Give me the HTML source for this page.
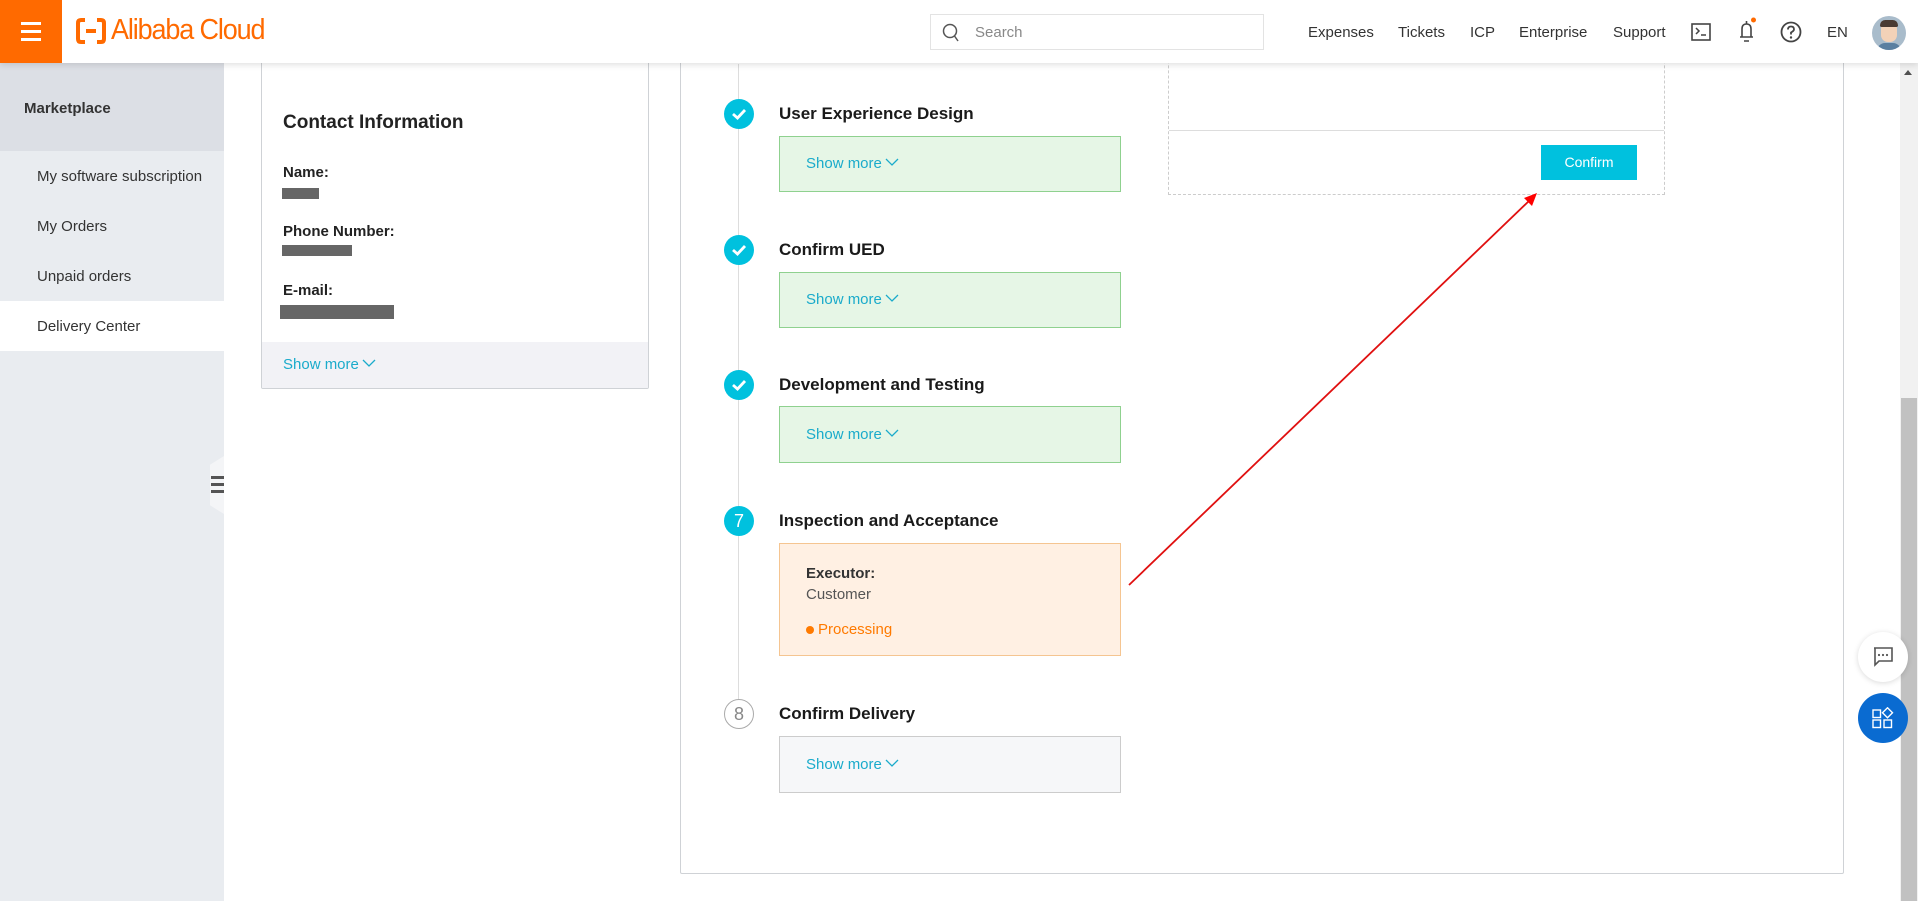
<!DOCTYPE html>
<html><head><meta charset="utf-8"><style>
*{margin:0;padding:0;box-sizing:border-box}
body{width:1918px;height:901px;overflow:hidden;background:#fff;font-family:"Liberation Sans",sans-serif;position:relative}
.abs{position:absolute}
.hdr{left:0;top:0;width:1918px;height:63px;background:#fff;box-shadow:0 2px 6px rgba(0,0,0,.12);z-index:10}
.nav{top:24px;font-size:15px;color:#333}
.side{left:0;top:63px;width:224px;height:838px;background:#e9ecf0}
.si{left:37px;font-size:15px;color:#333}
.card{border:1px solid #cfd2d6;border-radius:2px;background:#fff}
.lbl{font-size:15px;font-weight:bold;color:#222;left:283px}
.bar{background:#666;height:11px}
.sm{font-size:15px;color:#1aabcb}
.sm svg{vertical-align:1px;margin-left:3px}
.ttl{left:779px;font-size:17px;font-weight:bold;color:#1a1a1a}
.box{left:779px;width:342px}
.g{background:#e6f6e6;border:1px solid #8fd18f}
.dot{left:724px;width:30px;height:30px;border-radius:50%;background:#00c1de}
</style></head><body>
<div class="abs hdr">
 <div class="abs" style="left:0;top:0;width:62px;height:63px;background:#ff6a00">
  <div class="abs" style="left:21px;top:22px;width:20px;height:3px;background:#fff"></div>
  <div class="abs" style="left:21px;top:30px;width:20px;height:3px;background:#fff"></div>
  <div class="abs" style="left:21px;top:38px;width:20px;height:3px;background:#fff"></div>
 </div>
 <svg class="abs" style="left:76px;top:18px" width="30" height="26" viewBox="0 0 30 26"><path d="M9 2H5Q2 2 2 5V21Q2 24 5 24H9M21 2H25Q28 2 28 5V21Q28 24 25 24H21M10 13H20" fill="none" stroke="#ff6a00" stroke-width="4"/></svg>
 <div class="abs" style="left:111px;top:14px;font-size:29px;color:#ff6a00;letter-spacing:-1.2px;transform:scaleX(.93);transform-origin:left">Alibaba Cloud</div>
 <div class="abs" style="left:930px;top:14px;width:334px;height:36px;border:1px solid #e3e3e3">
  <svg class="abs" style="left:11px;top:8px" width="18" height="20" viewBox="0 0 18 20"><circle cx="8" cy="8" r="6.5" fill="none" stroke="#555" stroke-width="1.5"/><path d="M12.5 13L16 18" stroke="#555" stroke-width="1.5"/></svg>
  <div class="abs" style="left:44px;top:9px;font-size:15px;color:#888">Search</div>
 </div>
 <div class="abs nav" style="left:1308px">Expenses</div>
 <div class="abs nav" style="left:1398px">Tickets</div>
 <div class="abs nav" style="left:1470px">ICP</div>
 <div class="abs nav" style="left:1519px">Enterprise</div>
 <div class="abs nav" style="left:1613px">Support</div>
 <svg class="abs" style="left:1691px;top:23px" width="20" height="18" viewBox="0 0 20 18"><rect x="1" y="1" width="18" height="16" fill="none" stroke="#444" stroke-width="1.6"/><path d="M5 5L8 8L5 11M10 12H15" fill="none" stroke="#444" stroke-width="1.5"/></svg>
 <svg class="abs" style="left:1736px;top:17px" width="22" height="28" viewBox="0 0 22 28"><path d="M4 20H17M6 20V12Q6 7 10.5 7Q15 7 15 12V20M10.5 4V7M8 24H13" fill="none" stroke="#444" stroke-width="1.6"/><circle cx="17.5" cy="3" r="2.5" fill="#ff6a00"/></svg>
 <svg class="abs" style="left:1780px;top:21px" width="22" height="22" viewBox="0 0 22 22"><circle cx="11" cy="11" r="9.5" fill="none" stroke="#444" stroke-width="1.8"/><path d="M8 8.5Q8 5.5 11 5.5Q14 5.5 14 8.3Q14 10 11 11.5V13.5" fill="none" stroke="#444" stroke-width="1.8"/><circle cx="11" cy="16.5" r="1.2" fill="#444"/></svg>
 <div class="abs nav" style="left:1827px">EN</div>
 <div class="abs" style="left:1872px;top:16px;width:34px;height:34px;border-radius:50%;background:#a9bccb;overflow:hidden">
  <div class="abs" style="left:9px;top:6px;width:16px;height:20px;border-radius:7px;background:#f3d2b8"></div>
  <div class="abs" style="left:8px;top:4px;width:18px;height:7px;border-radius:6px 6px 2px 2px;background:#4a3b33"></div>
  <div class="abs" style="left:5px;top:27px;width:24px;height:10px;border-radius:8px 8px 0 0;background:#5a7fa0"></div>
 </div>
</div>

<div class="abs side">
 <div class="abs" style="left:0;top:0;width:224px;height:88px;background:#dcdfe5"></div>
 <div class="abs" style="left:24px;top:37px;font-size:15px;font-weight:bold;color:#333">Marketplace</div>
 <div class="abs si" style="top:105px">My software subscription</div>
 <div class="abs si" style="top:155px">My Orders</div>
 <div class="abs si" style="top:205px">Unpaid orders</div>
 <div class="abs" style="left:0;top:238px;width:224px;height:50px;background:#fff"></div>
 <div class="abs si" style="top:255px">Delivery Center</div>
</div>
<div class="abs" style="left:210px;top:456px;width:14px;height:58px;background:#f4f5f7;clip-path:polygon(0 15%,100% 0,100% 100%,0 85%)"></div>
<div class="abs" style="left:211px;top:476px;width:13px;height:3px;background:#555"></div>
<div class="abs" style="left:211px;top:483px;width:13px;height:3px;background:#555"></div>
<div class="abs" style="left:211px;top:490px;width:13px;height:3px;background:#555"></div>

<div class="abs card" style="left:261px;top:40px;width:388px;height:349px;overflow:hidden">
 <div class="abs" style="left:0;top:301px;width:388px;height:48px;background:#f2f2f6"></div>
 <div class="abs sm" style="left:21px;top:315px">Show more<svg width="14" height="9" viewBox="0 0 14 9"><path d="M1 1L7 7L13 1" fill="none" stroke="#1aabcb" stroke-width="1.3"/></svg></div>
</div>
<div class="abs" style="left:283px;top:112px;font-size:19px;font-weight:bold;color:#222">Contact Information</div>
<div class="abs lbl" style="top:164px">Name:</div>
<div class="abs bar" style="left:282px;top:188px;width:37px"></div>
<div class="abs lbl" style="top:223px">Phone Number:</div>
<div class="abs bar" style="left:282px;top:245px;width:70px"></div>
<div class="abs lbl" style="top:282px">E-mail:</div>
<div class="abs bar" style="left:280px;top:305px;width:114px;height:14px"></div>

<div class="abs card" style="left:680px;top:40px;width:1164px;height:834px"></div>
<div class="abs" style="left:738px;top:64px;width:1px;height:650px;background:#ddd"></div>
<div class="abs" style="left:1168px;top:40px;width:497px;height:155px;border:1px dashed #ccc;background:#fff"></div>
<div class="abs" style="left:1169px;top:130px;width:495px;height:1px;background:#ddd"></div>
<div class="abs" style="left:1541px;top:145px;width:96px;height:35px;background:#00c1de;color:#fff;font-size:14px;text-align:center;line-height:35px">Confirm</div>

<div class="abs dot" style="top:99px"><svg width="30" height="30"><path d="M9 15L13.5 19L21 11" fill="none" stroke="#fff" stroke-width="2.8"/></svg></div>
<div class="abs ttl" style="top:104px">User Experience Design</div>
<div class="abs box g" style="top:136px;height:56px"><div class="abs sm" style="left:26px;top:18px">Show more<svg width="14" height="9" viewBox="0 0 14 9"><path d="M1 1L7 7L13 1" fill="none" stroke="#1aabcb" stroke-width="1.3"/></svg></div></div>

<div class="abs dot" style="top:235px"><svg width="30" height="30"><path d="M9 15L13.5 19L21 11" fill="none" stroke="#fff" stroke-width="2.8"/></svg></div>
<div class="abs ttl" style="top:240px">Confirm UED</div>
<div class="abs box g" style="top:272px;height:56px"><div class="abs sm" style="left:26px;top:18px">Show more<svg width="14" height="9" viewBox="0 0 14 9"><path d="M1 1L7 7L13 1" fill="none" stroke="#1aabcb" stroke-width="1.3"/></svg></div></div>

<div class="abs dot" style="top:370px"><svg width="30" height="30"><path d="M9 15L13.5 19L21 11" fill="none" stroke="#fff" stroke-width="2.8"/></svg></div>
<div class="abs ttl" style="top:375px">Development and Testing</div>
<div class="abs box g" style="top:406px;height:57px"><div class="abs sm" style="left:26px;top:19px">Show more<svg width="14" height="9" viewBox="0 0 14 9"><path d="M1 1L7 7L13 1" fill="none" stroke="#1aabcb" stroke-width="1.3"/></svg></div></div>

<div class="abs dot" style="top:506px;color:#fff;font-size:18px;text-align:center;line-height:30px">7</div>
<div class="abs ttl" style="top:511px">Inspection and Acceptance</div>
<div class="abs box" style="top:543px;height:113px;background:#fff0e3;border:1px solid #f5c591">
 <div class="abs" style="left:26px;top:21px;font-size:15px;font-weight:bold;color:#333">Executor:</div>
 <div class="abs" style="left:26px;top:42px;font-size:15px;color:#555">Customer</div>
 <div class="abs" style="left:26px;top:82px;width:8px;height:8px;border-radius:50%;background:#ff7a00"></div>
 <div class="abs" style="left:38px;top:77px;font-size:15px;color:#ff7a00">Processing</div>
</div>

<div class="abs" style="left:724px;top:699px;width:30px;height:30px;border-radius:50%;border:1px solid #aaa;color:#888;font-size:18px;text-align:center;line-height:28px;background:#fff">8</div>
<div class="abs ttl" style="top:704px">Confirm Delivery</div>
<div class="abs box" style="top:736px;height:57px;background:#f6f7f9;border:1px solid #ccc"><div class="abs sm" style="left:26px;top:19px">Show more<svg width="14" height="9" viewBox="0 0 14 9"><path d="M1 1L7 7L13 1" fill="none" stroke="#1aabcb" stroke-width="1.3"/></svg></div></div>

<svg class="abs" style="left:0;top:0" width="1918" height="901"><line x1="1129" y1="585" x2="1530" y2="200" stroke="#e01010" stroke-width="1.8"/><polygon points="1537,193 1524,198 1532,206" fill="#f00"/></svg>

<div class="abs" style="left:1900px;top:63px;width:18px;height:838px;background:#f1f1f1"></div>
<div class="abs" style="left:1901px;top:398px;width:16px;height:503px;background:#c1c1c1"></div>
<div class="abs" style="left:1904px;top:70px;width:0;height:0;border-left:4px solid transparent;border-right:4px solid transparent;border-bottom:5px solid #505050"></div>

<div class="abs" style="left:1858px;top:632px;width:50px;height:50px;border-radius:50%;background:#fff;box-shadow:0 1px 6px rgba(0,0,0,.15)">
 <svg class="abs" style="left:14px;top:14px" width="22" height="22" viewBox="0 0 22 22"><path d="M2 2H20V15H7L3 19V2Z" fill="none" stroke="#555" stroke-width="1.6"/><circle cx="7" cy="9" r="1.1" fill="#555"/><circle cx="11" cy="9" r="1.1" fill="#555"/><circle cx="15" cy="9" r="1.1" fill="#555"/></svg>
</div>
<div class="abs" style="left:1858px;top:693px;width:50px;height:50px;border-radius:50%;background:#0a6bd1">
 <svg class="abs" style="left:14px;top:14px" width="22" height="22" viewBox="0 0 22 22"><g fill="none" stroke="#fff" stroke-width="1.4"><rect x="1" y="3" width="7.5" height="7.5"/><rect x="1" y="13" width="7.5" height="7.5"/><rect x="12" y="13" width="7.5" height="7.5"/><path d="M15.5 0.8L20.5 5.8L15.5 10.8L10.5 5.8Z"/></g></svg>
</div>
</body></html>
